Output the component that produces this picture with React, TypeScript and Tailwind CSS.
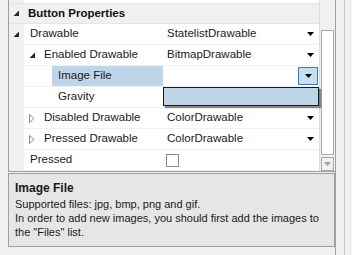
import React from "react";

const font = { fontFamily: '"Liberation Sans", Arial, sans-serif' };

function Arrow({ open }: { open: boolean }) {
  if (open) {
    return (
      <svg width="7" height="7" viewBox="0 0 7 7" className="block">
        <path d="M6 0.5 L6 6 L0.5 6 Z" fill="#262626" />
      </svg>
    );
  }
  return (
    <svg width="6" height="9" viewBox="0 0 6 9" className="block">
      <path d="M0.5 0.5 L5 4.5 L0.5 8.5 Z" fill="none" stroke="#8a8a8a" strokeWidth="1" />
    </svg>
  );
}

function Caret() {
  return (
    <svg width="7" height="4" viewBox="0 0 7 4" className="block">
      <path d="M0 0 L7 0 L3.5 4 Z" fill="#000" />
    </svg>
  );
}

type RowProps = {
  gutterArrow?: boolean;
  innerArrow?: "open" | "closed";
  indent: number;
  name: string;
  value?: React.ReactNode;
  caret?: boolean;
  selected?: boolean;
};

function Row({ gutterArrow, innerArrow, indent, name, value, caret, selected }: RowProps) {
  return (
    <div className="flex h-[21px] border-b border-[#f0f0f0]">
      <div className="w-[15px] flex items-center justify-center bg-[#f0f0f0] shrink-0">
        {gutterArrow && <Arrow open />}
      </div>
      <div className="w-[139px] flex shrink-0 bg-white">
        <div className="flex items-center shrink-0" style={{ width: indent }}>
          {innerArrow && (
            <div className="pl-[5px] pr-0">
              <Arrow open={innerArrow === "open"} />
            </div>
          )}
        </div>
        <div
          className={
            "flex-1 flex items-center pl-[6px] text-[11.5px] text-[#1a1a1a] whitespace-nowrap " +
            (selected ? "bg-[#bfd5ea]" : "")
          }
        >
          {name}
        </div>
      </div>
      <div className="flex-1 flex items-center bg-white pl-[4px] text-[11.5px] text-[#1a1a1a]">
        <div className="flex-1">{value}</div>
        {caret && (
          <div className="w-[15px] flex justify-center pr-[2px]">
            <Caret />
          </div>
        )}
      </div>
    </div>
  );
}

export default function App() {
  return (
    <div className="w-[352px] h-[255px] bg-[#f0f0f0] flex overflow-hidden" style={font}>
      <div className="w-[8px] shrink-0" />
      <div className="w-[327px] flex flex-col shrink-0">
        {/* grid */}
        <div className="h-[172px] flex border-l border-[#a0a0a0] border-b border-b-[#a0a0a0]">
          <div className="flex-1 flex flex-col relative">
            {/* tail of previous row */}
            <div className="flex h-[3px]">
              <div className="w-[15px] bg-[#f0f0f0]" />
              <div className="flex-1 bg-white" />
            </div>
            <div className="flex h-[21px] bg-[#f0f0f0] items-center border-y border-[#e6e6e6]">
              <div className="w-[15px] flex justify-center">
                <Arrow open />
              </div>
              <div className="pl-[4px] font-bold text-[11.5px] text-[#111]">Button Properties</div>
            </div>
            <Row gutterArrow indent={0} name="Drawable" value="StatelistDrawable" caret />
            <Row innerArrow="open" indent={14} name="Enabled Drawable" value="BitmapDrawable" caret />
            <div className="flex h-[21px] border-b border-[#f0f0f0]">
              <div className="w-[15px] bg-[#f0f0f0] shrink-0" />
              <div className="w-[139px] flex shrink-0 bg-white">
                <div className="w-[28px] shrink-0" />
                <div className="flex-1 flex items-center pl-[6px] text-[11.5px] text-[#1a1a1a] bg-[#bfd5ea]">
                  Image File
                </div>
              </div>
              <div className="flex-1 flex bg-white justify-end pr-[1px] py-[1px]">
                <div className="w-[20px] bg-[#c7dff3] border border-[#3d7ab3] flex items-center justify-center">
                  <Caret />
                </div>
              </div>
            </div>
            <Row indent={28} name="Gravity" />
            <Row innerArrow="closed" indent={14} name="Disabled Drawable" value="ColorDrawable" caret />
            <Row innerArrow="closed" indent={14} name="Pressed Drawable" value="ColorDrawable" caret />
            <Row
              indent={0}
              name="Pressed"
              value={<div className="w-[13px] h-[13px] border border-[#8a8a8a] bg-white ml-[-1px]" />}
            />
            {/* dropdown popup */}
            <div className="absolute left-[154px] top-[87px] w-[156px] h-[19px] bg-[#bfd5ea] border border-[#1a1a1a] shadow-[2px_2px_1px_rgba(0,0,0,0.45)]" />
          </div>
          {/* scrollbar */}
          <div className="w-[16px] bg-[#f0f0f0] flex flex-col border-l border-[#dcdcdc] shrink-0">
            <div className="h-[30px]" />
            <div className="h-[125px] mx-[1px] bg-white border border-[#a8a8a8]" />
            <div className="h-[2px]" />
            <div className="h-[14px] mx-[1px] border border-[#a8a8a8] bg-[#f0f0f0] flex items-center justify-center">
              <svg width="7" height="4" viewBox="0 0 7 4">
                <path d="M0 0 L7 0 L3.5 4 Z" fill="#a0a0a0" />
              </svg>
            </div>
          </div>
        </div>
        <div className="h-[1px]" />
        {/* description */}
        <div className="h-[74px] border border-[#a0a0a0] bg-[#e6e6e6] px-[6px] pt-[7px] text-[11px] text-[#1a1a1a] leading-[14px] whitespace-nowrap">
          <div className="font-bold text-[12px] mb-[2px]">Image File</div>
          <div>Supported files: jpg, bmp, png and gif.</div>
          <div>In order to add new images, you should first add the images to</div>
          <div>the "Files" list.</div>
        </div>
      </div>
      <div className="w-[9px] shrink-0 border-l border-[#a0a0a0]" />
      <div className="w-[1px] bg-[#c8c8c8] shrink-0" />
      <div className="flex-1" />
    </div>
  );
}
